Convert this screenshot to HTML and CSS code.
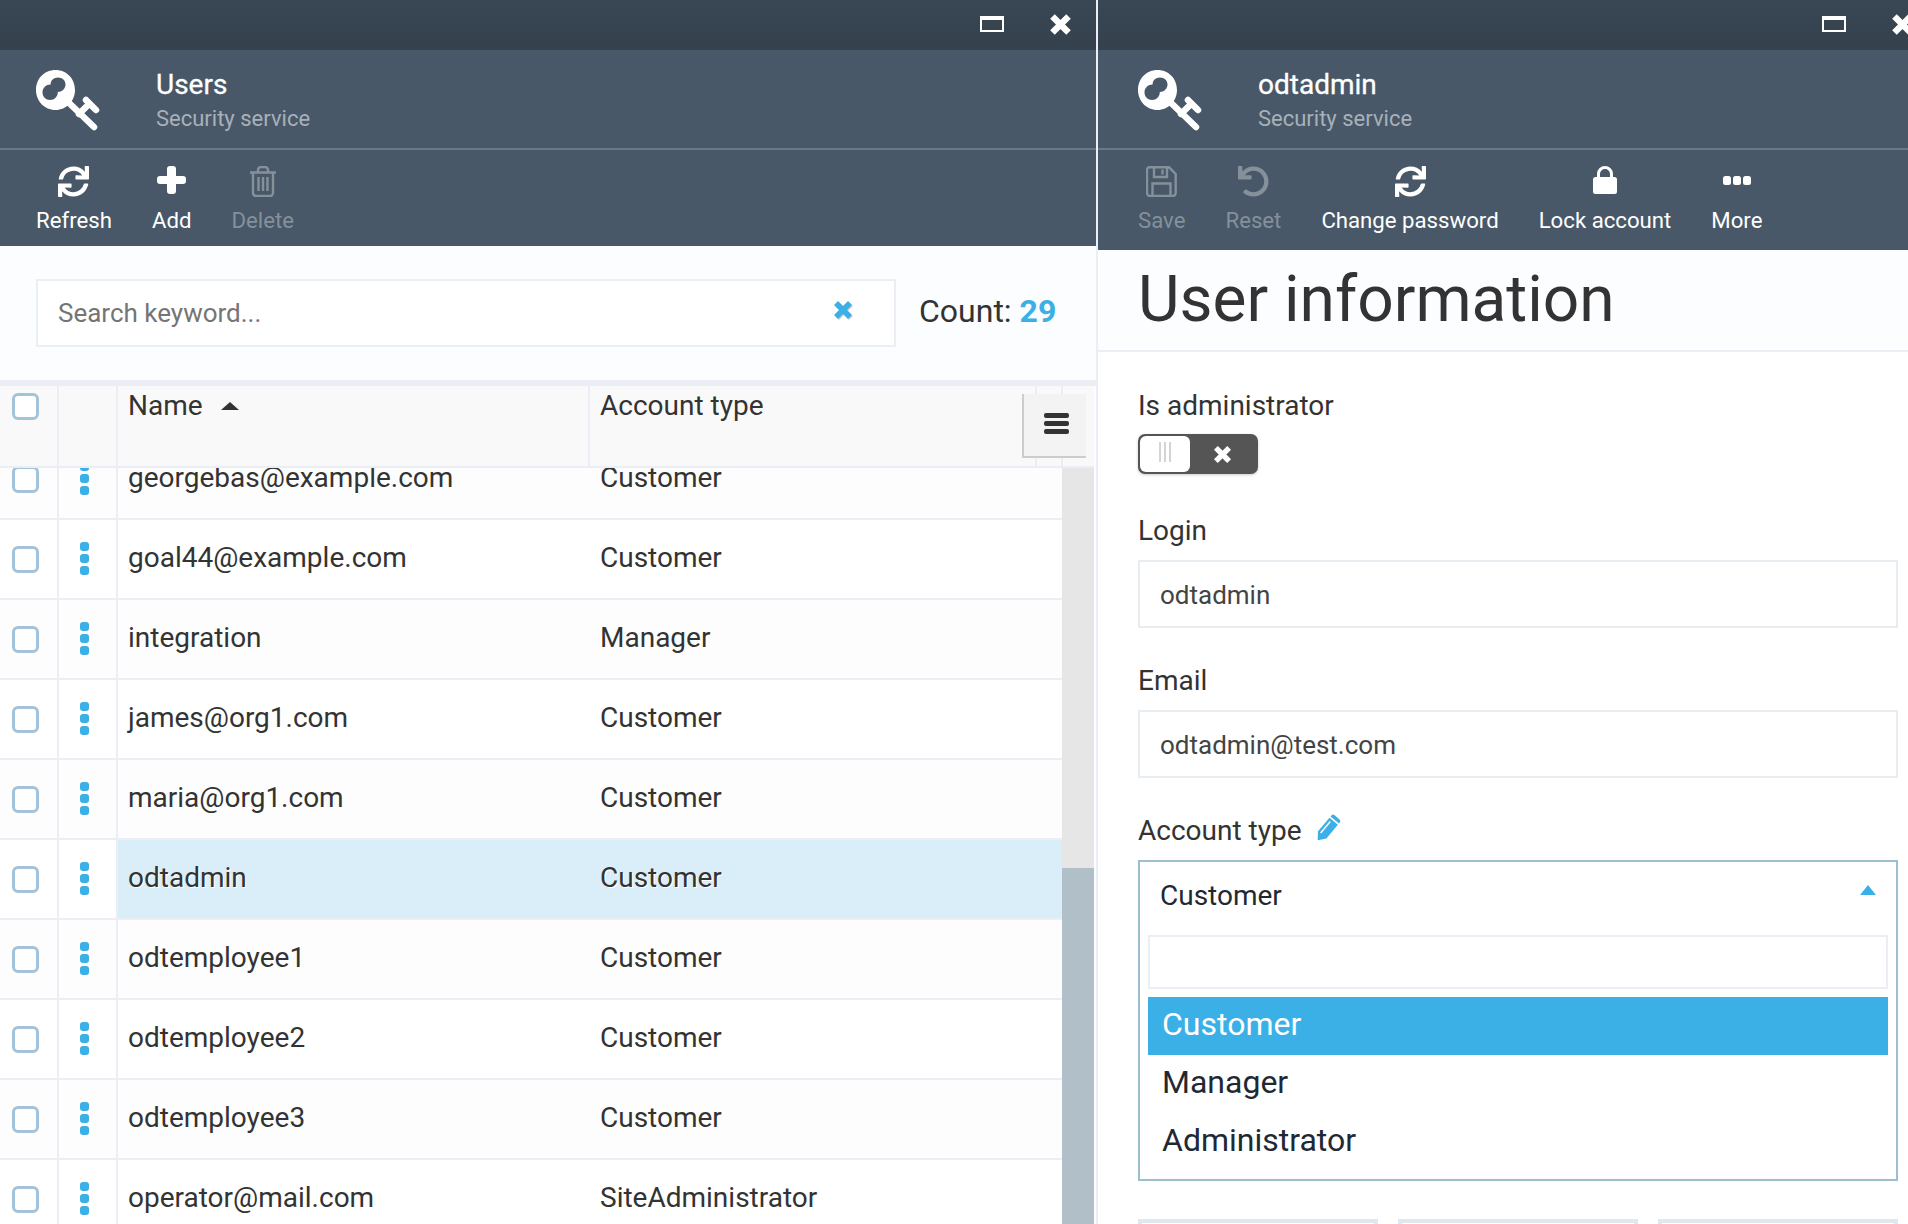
FILE: index.html
```html
<!DOCTYPE html>
<html lang="en">
<head>
<meta charset="utf-8">
<title>Security service</title>
<link rel="stylesheet" href="styles.css">
</head>
<body>
<svg class="defs" width="0" height="0" aria-hidden="true">
  <symbol id="i-key" viewBox="0 0 64 62">
    <path fill-rule="evenodd" d="M19.5 0C30.5 0 39 8.500 39 20C39 31 30.500 40 19.500 40C8.500 40 0 31 0 20C0 8.500 8.500 0 19.500 0ZM22 7.500C17.500 7.500 14.600 10.500 14.600 14.500C10 14.500 6.500 18 6.500 22.500C6.500 27 10 30 14 30C18.500 30 21.800 26.500 21.800 22C26 22 29.500 18.500 29.500 14.500C29.500 10.500 26.500 7.500 22 7.500Z"/>
    <path d="M30 30L58 57M43 44L53 34M50 30L60 40" fill="none" stroke-width="6.500" stroke-linecap="round" stroke="currentColor"/>
  </symbol>
  <symbol id="i-sync" viewBox="0 0 512 512"><path d="M440.65 12.57l4 82.77A247.16 247.16 0 0 0 255.83 8C134.73 8 33.91 94.92 12.29 209.82A12 12 0 0 0 24.09 224h49.05a12 12 0 0 0 11.67-9.26 175.91 175.91 0 0 1 317-56.94l-101.46-4.86a12 12 0 0 0-12.57 12v47.41a12 12 0 0 0 12 12H500a12 12 0 0 0 12-12V12a12 12 0 0 0-12-12h-47.37a12 12 0 0 0-11.98 12.57zM255.83 432a175.61 175.61 0 0 1-146-77.8l101.8 4.87a12 12 0 0 0 12.57-12v-47.4a12 12 0 0 0-12-12H12a12 12 0 0 0-12 12V500a12 12 0 0 0 12 12h47.35a12 12 0 0 0 12-12.6l-4.15-82.57A247.17 247.17 0 0 0 255.83 504c121.11 0 221.93-86.92 243.55-201.82a12 12 0 0 0-11.8-14.18h-49.05a12 12 0 0 0-11.67 9.26A175.86 175.86 0 0 1 255.83 432z"/></symbol>
  <symbol id="i-plus" viewBox="0 0 29 28"><path d="M10 3a3 3 0 0 1 3-3h3a3 3 0 0 1 3 3v7h7a3 3 0 0 1 3 3v2a3 3 0 0 1-3 3h-7v7a3 3 0 0 1-3 3h-3a3 3 0 0 1-3-3v-7H3a3 3 0 0 1-3-3v-2a3 3 0 0 1 3-3h7z"/></symbol>
  <symbol id="i-trash" viewBox="0 0 28 31"><path d="M1 6.500H27M4 6.500V27a3 3 0 0 0 3 3H21a3 3 0 0 0 3-3V6.500M9 6V4a3 3 0 0 1 3-3h4a3 3 0 0 1 3 3v2M9.500 11V25M14 11V25M18.500 11V25" fill="none" stroke="currentColor" stroke-width="2.400"/></symbol>
  <symbol id="i-save" viewBox="0 0 31 31"><path d="M4 1.300H23L29.700 8V27a3 3 0 0 1-3 3H4a3 3 0 0 1-3-3V4a3 3 0 0 1 3-3zM8 1.500V11H21V1.500M16.500 3.500V8.500M6.500 30V17.500H24.500V30" fill="none" stroke="currentColor" stroke-width="2.400"/></symbol>
  <symbol id="i-undo" viewBox="0 0 512 512"><path d="M212.333 224.333H12c-6.627 0-12-5.373-12-12V12C0 5.373 5.373 0 12 0h48c6.627 0 12 5.373 12 12v78.112C117.773 39.279 184.26 7.47 258.175 8.007c136.906.994 246.448 111.623 246.157 248.532C504.041 393.258 393.12 504 256.333 504c-64.089 0-122.496-24.313-166.51-64.215-5.099-4.622-5.334-12.554-.467-17.42l33.967-33.967c4.474-4.474 11.662-4.717 16.401-.525C170.76 415.336 211.58 432 256.333 432c97.268 0 176-78.716 176-176 0-97.267-78.716-176-176-176-58.496 0-110.28 28.476-142.274 72.333h98.274c6.627 0 12 5.373 12 12v48c0 6.627-5.373 12-12 12z"/></symbol>
  <symbol id="i-lock" viewBox="0 0 24 28"><path fill-rule="evenodd" d="M4 11V8a8 8 0 0 1 16 0v3h1.500A2.500 2.500 0 0 1 24 13.500v12a2.500 2.500 0 0 1-2.500 2.500H2.500A2.500 2.500 0 0 1 0 25.500v-12A2.500 2.500 0 0 1 2.500 11zM7 11h10V8a5 5 0 0 0-10 0z"/></symbol>
  <symbol id="i-more" viewBox="0 0 28 10"><rect width="8" height="9" rx="2.500"/><rect x="10" width="8" height="9" rx="2.500"/><rect x="20" width="8" height="9" rx="2.500"/></symbol>
  <symbol id="i-x" viewBox="0 0 20 20"><path d="M5 5L15 15M15 5L5 15" fill="none" stroke="currentColor" stroke-width="5.600" stroke-linecap="square"/></symbol>
  <symbol id="i-pencil" viewBox="0 0 28 28"><g transform="rotate(40 14 14)"><path d="M8.500 3.500V2.500a2.500 2.500 0 0 1 2.500-2.500h6a2.500 2.500 0 0 1 2.500 2.500V3.500zM8.500 5.200h11V23L14 30L8.500 23z"/><path d="M11.500 7.500V22.500" stroke="#fff" stroke-width="1.500"/></g></symbol>
</svg>

<main class="desktop">
  <section class="window window-list">
    <div class="titlebar">
      <span class="win-max"></span>
      <svg class="win-close"><use href="#i-x"/></svg>
    </div>
    <header class="app-head">
      <svg class="app-key"><use href="#i-key"/></svg>
      <div class="app-names">
        <div class="app-title">Users</div>
        <div class="app-sub">Security service</div>
      </div>
    </header>
    <nav class="toolbar">
      <button class="tool"><svg class="ic ic-31"><use href="#i-sync"/></svg><span>Refresh</span></button>
      <button class="tool"><svg class="ic ic-plus"><use href="#i-plus"/></svg><span>Add</span></button>
      <button class="tool off"><svg class="ic ic-tall"><use href="#i-trash"/></svg><span>Delete</span></button>
    </nav>
    <div class="search-panel">
      <div class="search-box">
        <span class="placeholder">Search keyword...</span>
        <svg class="search-x"><use href="#i-x"/></svg>
      </div>
      <div class="count">Count: <b>29</b></div>
    </div>
    <div class="table">
      <div class="thead">
        <div class="hc hc-check"><span class="check"></span></div>
        <div class="hc"></div>
        <div class="hc hc-text">Name<i class="sort"></i></div>
        <div class="hc hc-text">Account type</div>
        <div class="hc"></div>
        <div class="hc hc-last"></div>
        <div class="menu-btn"><i></i><i></i><i></i></div>
      </div>
      <div class="tbody">
        <div class="rows">
          <div class="row odd"><div class="c"><span class="check"></span></div><div class="c"><span class="dots"><i></i><i></i><i></i></span></div><div class="c t">georgebas@example.com</div><div class="c t">Customer</div></div>
          <div class="row"><div class="c"><span class="check"></span></div><div class="c"><span class="dots"><i></i><i></i><i></i></span></div><div class="c t">goal44@example.com</div><div class="c t">Customer</div></div>
          <div class="row odd"><div class="c"><span class="check"></span></div><div class="c"><span class="dots"><i></i><i></i><i></i></span></div><div class="c t">integration</div><div class="c t">Manager</div></div>
          <div class="row"><div class="c"><span class="check"></span></div><div class="c"><span class="dots"><i></i><i></i><i></i></span></div><div class="c t">james@org1.com</div><div class="c t">Customer</div></div>
          <div class="row odd"><div class="c"><span class="check"></span></div><div class="c"><span class="dots"><i></i><i></i><i></i></span></div><div class="c t">maria@org1.com</div><div class="c t">Customer</div></div>
          <div class="row selected"><div class="c"><span class="check"></span></div><div class="c"><span class="dots"><i></i><i></i><i></i></span></div><div class="c t">odtadmin</div><div class="c t">Customer</div></div>
          <div class="row odd"><div class="c"><span class="check"></span></div><div class="c"><span class="dots"><i></i><i></i><i></i></span></div><div class="c t">odtemployee1</div><div class="c t">Customer</div></div>
          <div class="row"><div class="c"><span class="check"></span></div><div class="c"><span class="dots"><i></i><i></i><i></i></span></div><div class="c t">odtemployee2</div><div class="c t">Customer</div></div>
          <div class="row odd"><div class="c"><span class="check"></span></div><div class="c"><span class="dots"><i></i><i></i><i></i></span></div><div class="c t">odtemployee3</div><div class="c t">Customer</div></div>
          <div class="row"><div class="c"><span class="check"></span></div><div class="c"><span class="dots"><i></i><i></i><i></i></span></div><div class="c t">operator@mail.com</div><div class="c t">SiteAdministrator</div></div>
        </div>
        <div class="scrollbar"><div class="thumb"></div></div>
      </div>
    </div>
  </section>

  <section class="window window-form">
    <div class="titlebar">
      <span class="win-max"></span>
      <svg class="win-close"><use href="#i-x"/></svg>
    </div>
    <header class="app-head">
      <svg class="app-key"><use href="#i-key"/></svg>
      <div class="app-names">
        <div class="app-title">odtadmin</div>
        <div class="app-sub">Security service</div>
      </div>
    </header>
    <nav class="toolbar toolbar-form">
      <button class="tool off"><svg class="ic ic-31"><use href="#i-save"/></svg><span>Save</span></button>
      <button class="tool off"><svg class="ic ic-31"><use href="#i-undo"/></svg><span>Reset</span></button>
      <button class="tool"><svg class="ic ic-31"><use href="#i-sync"/></svg><span>Change password</span></button>
      <button class="tool"><svg class="ic ic-lock"><use href="#i-lock"/></svg><span>Lock account</span></button>
      <button class="tool"><svg class="ic ic-more"><use href="#i-more"/></svg><span>More</span></button>
    </nav>
    <div class="page-head"><h1>User information</h1></div>
    <form class="form">
      <label class="lbl lbl-first">Is administrator</label>
      <div class="toggle">
        <span class="knob"><i></i><i></i><i></i></span>
        <svg class="toggle-x"><use href="#i-x"/></svg>
      </div>
      <label class="lbl lbl-login">Login</label>
      <div class="input">odtadmin</div>
      <label class="lbl">Email</label>
      <div class="input">odtadmin@test.com</div>
      <label class="lbl">Account type<svg class="pencil"><use href="#i-pencil"/></svg></label>
      <div class="select">
        <div class="select-value">Customer<i class="caret"></i></div>
        <div class="select-search"></div>
        <div class="option active">Customer</div>
        <div class="option">Manager</div>
        <div class="option">Administrator</div>
      </div>
      <div class="tiles">
        <div class="tile"></div>
        <div class="tile"></div>
        <div class="tile"></div>
      </div>
    </form>
  </section>
</main>
</body>
</html>
```
FILE: styles.css
```css
* { box-sizing: border-box; }
html, body { margin: 0; height: 1224px; overflow: hidden; background: #fff; }
body { font-family: Roboto, "Liberation Sans", sans-serif; color: #333; }
.defs { position: absolute; }
.desktop { display: flex; height: 1224px; width: 1944px; margin-left: -4px; }
.window { display: flex; flex-direction: column; height: 1224px; flex: none; overflow: hidden; position: relative; }
.window-list { width: 1102px; border-right: 2px solid #ebeef4; background: #fcfdff; }
.window-form { width: 842px; background: #fff; }

.titlebar { height: 50px; background: linear-gradient(#394653, #35424e); display: flex; align-items: center; justify-content: flex-end; flex: none; padding-right: 26px; margin-right: -2px; }
.window-form .titlebar { margin-right: 0; }
.win-max { width: 24px; height: 16px; border: 2px solid #fff; border-top-width: 4px; margin-right: 45px; margin-top: -2px; }
.win-close { width: 23px; height: 23px; color: #fff; margin-top: -2px; }

.app-head { height: 100px; background: #485868; border-bottom: 2px solid #6b7885; display: flex; flex: none; padding-left: 40px; color: #fff; }
.app-key { width: 64px; height: 62px; margin-top: 20px; color: #fff; fill: #fff; }
.app-names { margin-left: 56px; margin-top: 17px; }
.app-title { font-size: 28px; line-height: 36px; font-weight: 400; -webkit-text-stroke: 0.3px #fff; }
.app-sub { font-size: 22px; line-height: 30px; color: #a8b0b8; margin-top: 1px; }

.toolbar { height: 96px; background: #485868; display: flex; flex: none; padding-left: 20px; padding-top: 16px; }
.toolbar-form { height: 100px; padding-left: 20px; }
.tool { background: none; border: 0; padding: 0 20px; color: #fff; font: 400 22.200px/26px Roboto, sans-serif; display: flex; flex-direction: column; align-items: center; }
.tool.off { color: #85909b; }
.tool span { display: block; }
.ic { display: block; width: 31px; height: 31px; fill: currentColor; margin-bottom: 10px; }
.ic-plus { width: 29px; height: 28px; margin-bottom: 13px; }
.ic-tall { width: 28px; height: 31px; }
.ic-lock { width: 24px; height: 28px; margin-bottom: 13px; }
.ic-more { width: 28px; height: 10px; margin-top: 10px; margin-bottom: 21px; }

.search-panel { height: 134px; flex: none; display: flex; align-items: center; padding-left: 40px; }
.search-box { width: 860px; height: 68px; background: #fff; border: 2px solid #ebeef4; display: flex; align-items: center; padding-left: 20px; position: relative; }
.placeholder { font-size: 26px; color: #757575; }
.search-x { width: 20px; height: 20px; position: absolute; right: 41px; top: 19px; color: #3bb0e6; filter: drop-shadow(1px 1px 0 #ccc); }
.count { margin-left: 23px; font-size: 32px; line-height: 38px; margin-top: -4px; }
.count b { color: #3bb0e6; font-weight: 700; }

.table { flex: 1; min-height: 0; border-top: 6px solid #ebeef4; display: flex; flex-direction: column; }
.thead { height: 82px; flex: none; display: grid; grid-template-columns: 63px 59px 472px 447px 26px 31px; border-bottom: 2px solid #ebeef4; background: #f9f9f9; position: relative; margin-right: 2px; }
.hc { border-right: 2px solid #ebeef4; }
.hc-last { border-right: 0; }
.hc-check { padding: 7px 0 0 16px; }
.hc-text { padding: 3px 0 0 10px; font-size: 28px; line-height: 34px; color: #333; }
.sort { display: inline-block; margin-left: 18px; vertical-align: 5px; border: 9px solid transparent; border-top: 0; border-bottom: 8px solid #333; }
.menu-btn { position: absolute; left: 1026px; top: 8px; width: 64px; height: 64px; padding: 0 0 3px 2px; background: #f3f3f3; border-left: 2px solid #ccc; border-bottom: 2px solid #ccc; display: flex; flex-direction: column; justify-content: center; align-items: center; gap: 3px; }
.menu-btn i { display: block; width: 25px; height: 5px; border-radius: 2px; background: #333; }

.tbody { flex: 1; min-height: 0; display: flex; overflow: hidden; }
.rows { flex: 1; margin-top: -28px; min-width: 0; }
.row { height: 80px; display: grid; grid-template-columns: 63px 59px 1fr 472px; border-bottom: 2px solid #ebeef4; background: #fff; }
.row.odd { background: #fdfdfd; }
.c { display: flex; align-items: center; }
.c:first-child, .c:nth-child(2) { border-right: 2px solid #ebeef4; }
.c:first-child { padding-left: 16px; }
.c:nth-child(2) { padding-left: 21px; padding-bottom: 2px; }
.c.t { padding-left: 10px; padding-bottom: 4px; font-size: 28px; color: #333; }
.row.selected .c.t { background: #d9eef9; text-shadow: 1px 1px 0 #fff; }
.check { display: block; width: 27px; height: 27px; border: 3px solid #a3c3d9; border-radius: 6px; background: #fff; }
.dots { display: flex; flex-direction: column; gap: 3px; }
.dots i { display: block; width: 9px; height: 9px; border-radius: 3px; background: #3bb0e6; }
.scrollbar { width: 32px; margin-right: 2px; background: #e6e6e6; padding-top: 400px; flex: none; }
.thumb { height: 100%; background: #b0bfc8; }

.page-head { height: 102px; flex: none; background: #fcfdff; border-bottom: 2px solid #ebeef4; padding: 12px 0 0 40px; }
h1 { margin: 0; font-weight: 400; font-size: 64px; line-height: 76px; color: #333; }

.form { padding: 38px 42px 0 40px; display: flex; flex-direction: column; }
.lbl { display: flex; align-items: center; font-size: 28px; line-height: 32px; margin-top: 37px; margin-bottom: 13px; color: #333; }
.lbl-first { margin-top: 0; margin-bottom: 12px; }
.lbl-login { margin-top: 41px; }
.pencil { width: 28px; height: 28px; margin-left: 12px; margin-top: -6px; fill: #3bb0e6; }
.toggle { width: 120px; height: 40px; background: #555; border-radius: 7px; padding: 2px; display: flex; align-items: center; box-shadow: 0 1px 3px rgba(0,0,0,.2); }
.knob { width: 50px; height: 36px; border-radius: 6px; background: #fff; display: flex; justify-content: center; align-items: center; gap: 3px; }
.knob i { display: block; width: 2px; height: 20px; background: #d4d4d4; margin-top: -4px; }
.toggle-x { width: 19px; height: 19px; margin-left: 23px; color: #fff; }
.input { height: 68px; border: 2px solid #e8edf2; background: #fff; display: flex; align-items: center; padding: 2px 0 0 20px; font-size: 26px; color: #444; }

.select { height: 321px; border: 2px solid #9dbdd1; background: #fff; padding: 0 8px; }
.select-value { height: 73px; display: flex; align-items: center; justify-content: space-between; padding: 0 12px 6px 12px; font-size: 28px; color: #1f2933; }
.caret { border: 8px solid transparent; border-top: 0; border-bottom: 10px solid #3bb0e6; margin-top: -12px; }
.select-search { height: 54px; border: 2px solid #ebeef4; margin-bottom: 8px; }
.option { height: 58px; display: flex; align-items: center; padding: 0 0 5px 14px; font-size: 32px; color: #1f2933; }
.option.active { background: #3bb0e6; color: #fff; }

.tiles { display: grid; grid-template-columns: repeat(3, 240px); gap: 20px; margin-top: 38px; }
.tile { height: 100px; border: 4px solid #dfe8ee; background: #fff; }
```
